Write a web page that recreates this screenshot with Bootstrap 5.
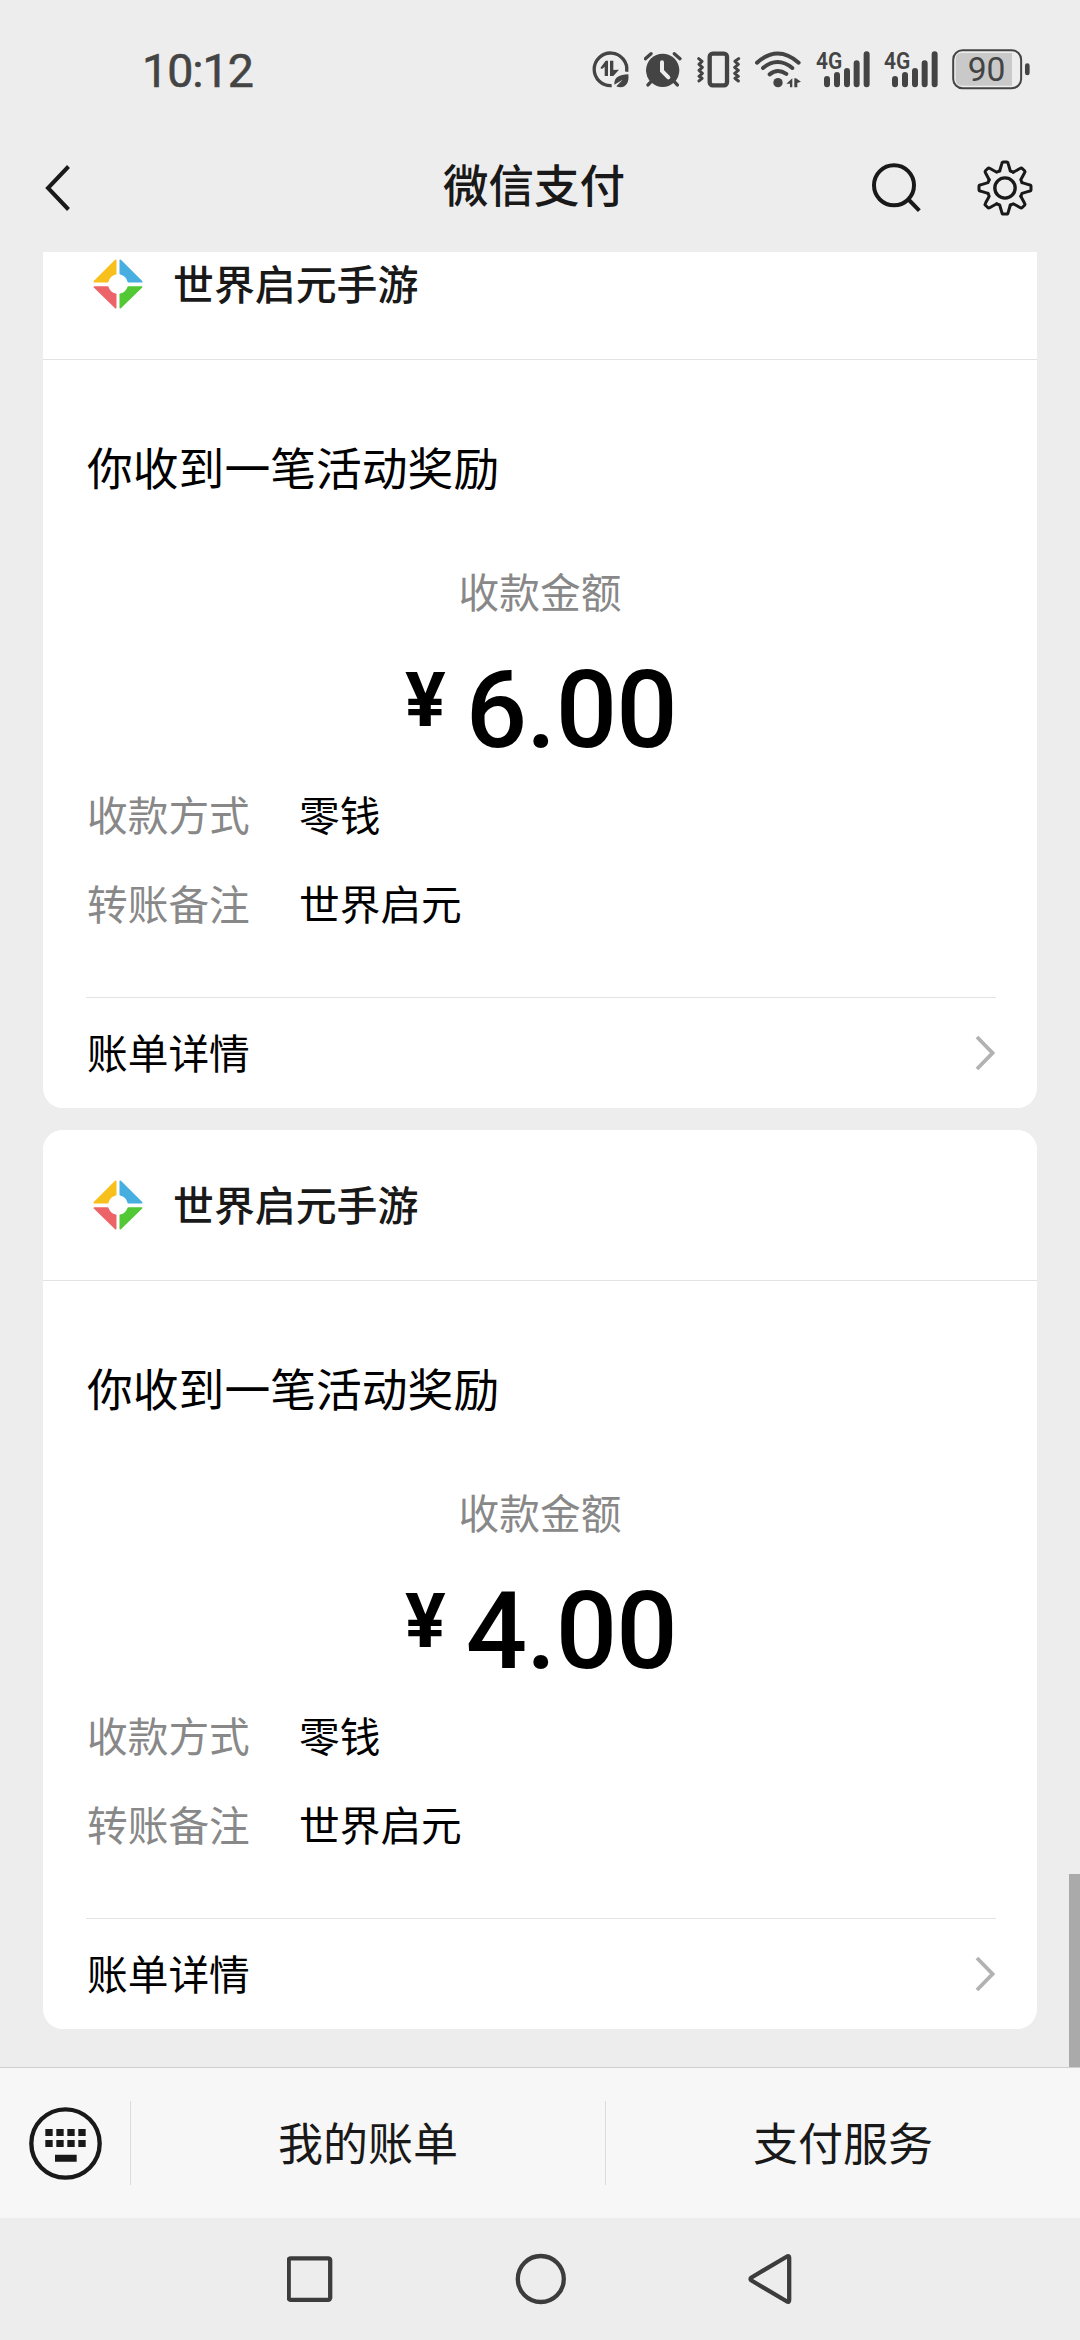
<!DOCTYPE html>
<html lang="zh-CN">
<head>
<meta charset="utf-8">
<meta name="viewport" content="width=device-width, initial-scale=1">
<title>微信支付</title>
<link href="https://cdn.jsdelivr.net/npm/bootstrap@5.3.0/dist/css/bootstrap.min.css" rel="stylesheet">
<style>
  body { background: #ededed; color: #000; font-family: "Noto Sans CJK SC", sans-serif; }
  .screen { width: 1080px; height: 2340px; }
  svg { display: block; flex: none; }
  .status-bar { height: 126px; padding: 11px 50px 0 142px; color: #444; }
  .clock { font: 400 46.5px/60px Roboto, sans-serif; letter-spacing: -1px; padding-top: 4px; -webkit-text-stroke: .6px #444; }
  .title-bar { height: 126px; padding: 0 47px 3px 45px; color: #191919; }
  .page-title { font-size: 45.5px; line-height: 60px; font-weight: 500; padding: 0 0 9px 126px; }
  .feed { min-height: 0; flex: 1 1 0; padding: 0 43px 38px; gap: 22px; }
  .pay-card { height: 899px; border: 0; border-radius: 20px; }
  .pay-card .card-header { height: 151px; padding: 0 50px; gap: 30px; border-color: #e3e3e3; border-radius: 20px 20px 0 0; color: #191919; }
  .merchant { font-size: 40.9px; line-height: 60px; font-weight: 500; padding-bottom: 2px; }
  .pay-card .card-body { padding: 76px 44px 0; }
  .message { font-size: 45.8px; line-height: 60px; }
  .field { font-size: 40.7px; line-height: 60px; }
  .muted { color: #888; }
  .amount-label { margin-top: 65px; }
  .amount { margin-top: 29px; height: 120px; font-family: Roboto, sans-serif; font-weight: 500; gap: 20px; padding-left: 2px; }
  .amount .yen { font-size: 76px; line-height: 100px; font-weight: 700; }
  .amount .num { font-size: 108px; line-height: 120px; letter-spacing: -.7px; }
  .fields { margin-top: 14px; gap: 29px; }
  .fields .muted { width: 212px; }
  .pay-card .card-footer { height: 111px; margin: 0 41px 0 43px; padding: 0 1px; border-color: #e3e3e3; border-radius: 0; }
  .card-footer .field { padding-bottom: 2px; }
  .thumb-bar { right: 0; bottom: 0; width: 11px; height: 193px; background: #aaa; }
  .menu-bar { height: 151px; background: #f7f7f7; border-top: 1px solid #cfcfcf; color: #191919; }
  .menu-key { width: 130px; }
  .menu-item { flex: 1 1 0; border-left: 1px solid #dcdcdc; height: 84px; font-size: 45px; line-height: 60px; padding-bottom: 2px; }
  .nav-keys { height: 122px; }
</style>
</head>
<body>
<svg width="0" height="0" class="position-absolute">
  <defs>
    <symbol id="logo" viewBox="-75 -75 150 150">
      <g stroke-width="5" stroke-linejoin="round">
        <path d="M-7-71V-31A32 32 0 0 0-31-7H-71Z" fill="#f7c01c" stroke="#f7c01c"/>
        <path d="M7-71V-31A32 32 0 0 1 31-7H71Z" fill="#48aee0" stroke="#48aee0"/>
        <path d="M-7 71V31A32 32 0 0 1-31 9H-71Z" fill="#ec6468" stroke="#ec6468"/>
        <path d="M7 71V31A32 32 0 0 0 31 9H71Z" fill="#52c835" stroke="#52c835"/>
      </g>
    </symbol>
    <symbol id="chevron" viewBox="0 0 20 36">
      <path d="M2 2 17.500 18 2 34" fill="none" stroke="#b2b2b2" stroke-width="3.800"/>
    </symbol>
    <symbol id="signal" viewBox="768 50 164 130">
      <text x="768" y="115" font-family="Roboto, sans-serif" font-weight="600" font-size="70" textLength="79" lengthAdjust="spacingAndGlyphs" fill="#444">4G</text>
      <path d="M801 146V162M831 134V162M861 122V162M890 99V162M920 72V162" stroke="#444" stroke-width="18" stroke-linecap="round"/>
    </symbol>
    <path id="tooth" d="M-16-51-9.500-73Q-8.500-78-5-78H5Q8.500-78 9.500-73L16-51 25-47.400"/>
  </defs>
</svg>

<div class="screen d-flex flex-column overflow-hidden">
  <div class="status-bar flex-shrink-0 d-flex align-items-center justify-content-between">
    <span class="clock">10:12</span>
    <div class="d-flex align-items-center">
      <svg width="52" height="43.300" viewBox="96 50 156 130">
        <path d="M200 124A49 49 0 1 0 155 166" fill="none" stroke="#444" stroke-width="10"/>
        <path d="M121 113 137 91H144V137H134V109L126 116Z M150 91H160V137H150Z M160 137V119L177 118Z" fill="#444"/>
        <path d="M205 132C208 156 199 170 182 171Q173 171 169 168L188 148 163 163C162 140 178 134 205 132Z" fill="#444"/>
      </svg>
      <svg width="53" height="43.300" viewBox="252 50 159 130">
        <circle cx="308" cy="120" r="50" fill="#444"/>
        <path d="M256 85 273 70M343 70 360 85M276 151 264 164M340 151 352 164" stroke="#444" stroke-width="10" stroke-linecap="round"/>
        <path d="M306 96V122L325 141" fill="none" stroke="#ededed" stroke-width="12" stroke-linecap="round"/>
      </svg>
      <svg width="58.700" height="43.300" viewBox="411 50 176 130">
        <rect x="449" y="70" width="52" height="95" rx="9" fill="none" stroke="#444" stroke-width="13"/>
        <path d="M416 85 426 93 417 102 427 111 417 120 427 129 417 138 426 144 417 152M536 85 525 93 535 102 524 111 535 120 524 129 535 138 525 144 535 152" fill="none" stroke="#444" stroke-width="9" stroke-linecap="round" stroke-linejoin="round"/>
      </svg>
      <svg width="60.300" height="43.300" viewBox="587 50 181 130">
        <g fill="none" stroke="#444" stroke-width="12" stroke-linecap="round">
          <path d="M593 97Q655 42 718 97M611 113Q655 77 699 113M631 132Q655 113 681 131"/>
        </g>
        <circle cx="656" cy="157" r="14" fill="#444"/>
        <path d="M681 160 699 144V171H692V160ZM705 144H710L725 154 714 158V171H705Z" fill="#444"/>
      </svg>
      <svg width="68.300" height="43.300" viewBox="768 50 205 130"><use href="#signal" x="768" y="50" width="164" height="130"/></svg>
      <svg width="68" height="43.300" viewBox="768 50 204 130"><use href="#signal" x="768" y="50" width="164" height="130"/></svg>
      <svg width="78" height="43.300" viewBox="1176 50 234 130">
        <path d="M1206 68H1356V166H1206Q1187 166 1187 148V86Q1187 68 1206 68Z" fill="#c9c9c9"/>
        <rect x="1179.500" y="60" width="204" height="114" rx="28" fill="none" stroke="#444" stroke-width="6"/>
        <rect x="1395" y="99" width="14" height="36" rx="7" fill="#444"/>
        <text x="1223" y="152" font-family="Roboto, sans-serif" font-size="101" fill="#444">90</text>
      </svg>
    </div>
  </div>

  <div class="title-bar flex-shrink-0 d-flex align-items-center justify-content-between">
    <svg width="26" height="46" viewBox="0 0 26 46"><path d="M23.500 1.500 3 23 23.500 44.500" fill="none" stroke="#191919" stroke-width="4"/></svg>
    <div class="page-title flex-grow-1 text-center">微信支付</div>
    <div class="d-flex align-items-center">
      <svg width="106" height="56" viewBox="271 88 318 168" fill="none" stroke="#191919">
        <circle cx="340" cy="164" r="60" stroke-width="12"/><path d="M382 205 416 240" stroke-width="12"/>
      </svg>
      <svg width="56" height="56" viewBox="-84 -84 168 168" fill="none" stroke="#191919" stroke-width="9" stroke-linejoin="round" stroke-linecap="round">
        <circle r="30.500" stroke-width="10"/>
        <use href="#tooth"/><use href="#tooth" transform="rotate(45)"/><use href="#tooth" transform="rotate(90)"/><use href="#tooth" transform="rotate(135)"/>
        <use href="#tooth" transform="rotate(180)"/><use href="#tooth" transform="rotate(225)"/><use href="#tooth" transform="rotate(270)"/><use href="#tooth" transform="rotate(315)"/>
      </svg>
    </div>
  </div>

  <div class="feed position-relative d-flex flex-column justify-content-end overflow-hidden">
    <div class="card pay-card flex-shrink-0">
      <div class="card-header bg-white d-flex align-items-center">
        <svg width="50" height="50"><use href="#logo"/></svg>
        <span class="merchant">世界启元手游</span>
      </div>
      <div class="card-body">
        <div class="message">你收到一笔活动奖励</div>
        <div class="amount-label field muted text-center">收款金额</div>
        <div class="amount d-flex justify-content-center align-items-start"><span class="yen">¥</span><span class="num">6.00</span></div>
        <div class="fields d-flex flex-column">
          <div class="field d-flex"><span class="muted">收款方式</span><span>零钱</span></div>
          <div class="field d-flex"><span class="muted">转账备注</span><span>世界启元</span></div>
        </div>
      </div>
      <div class="card-footer bg-white d-flex align-items-center justify-content-between">
        <span class="field">账单详情</span>
        <svg width="20" height="36"><use href="#chevron"/></svg>
      </div>
    </div>

    <div class="card pay-card flex-shrink-0">
      <div class="card-header bg-white d-flex align-items-center">
        <svg width="50" height="50"><use href="#logo"/></svg>
        <span class="merchant">世界启元手游</span>
      </div>
      <div class="card-body">
        <div class="message">你收到一笔活动奖励</div>
        <div class="amount-label field muted text-center">收款金额</div>
        <div class="amount d-flex justify-content-center align-items-start"><span class="yen">¥</span><span class="num">4.00</span></div>
        <div class="fields d-flex flex-column">
          <div class="field d-flex"><span class="muted">收款方式</span><span>零钱</span></div>
          <div class="field d-flex"><span class="muted">转账备注</span><span>世界启元</span></div>
        </div>
      </div>
      <div class="card-footer bg-white d-flex align-items-center justify-content-between">
        <span class="field">账单详情</span>
        <svg width="20" height="36"><use href="#chevron"/></svg>
      </div>
    </div>
    <div class="thumb-bar position-absolute"></div>
  </div>

  <div class="menu-bar flex-shrink-0 d-flex align-items-center">
    <div class="menu-key flex-shrink-0 d-flex justify-content-center">
      <svg width="73" height="73" viewBox="87 201 219 219">
        <circle cx="196.500" cy="310.500" r="102.500" fill="none" stroke="#191919" stroke-width="13"/>
        <path d="M136 267h22v21h-22zM169 267h22v21h-22zM202 267h22v21h-22zM235 267h22v21h-22zM136 300h22v21h-22zM169 300h22v21h-22zM202 300h22v21h-22zM235 300h22v21h-22zM165 344h65v21h-65z" fill="#191919"/>
      </svg>
    </div>
    <div class="menu-item d-flex align-items-center justify-content-center">我的账单</div>
    <div class="menu-item d-flex align-items-center justify-content-center">支付服务</div>
  </div>

  <div class="nav-keys flex-shrink-0 d-flex align-items-center justify-content-center">
    <svg width="506" height="54" viewBox="286 2252 506 54" fill="none" stroke="#3c3c3c" stroke-width="4.300" stroke-linejoin="round">
      <rect x="287.700" y="2258.300" width="41.500" height="41.500" rx="2"/>
      <circle cx="539.800" cy="2279" r="23"/>
      <path d="M786 2256.500Q788.200 2255.500 788.200 2258V2300Q788.200 2302.500 786 2301.500L750.500 2280.500Q748.500 2279 750.500 2277.500Z"/>
    </svg>
  </div>
</div>
<script src="https://cdn.jsdelivr.net/npm/bootstrap@5.3.0/dist/js/bootstrap.bundle.min.js"></script>
</body>
</html>
